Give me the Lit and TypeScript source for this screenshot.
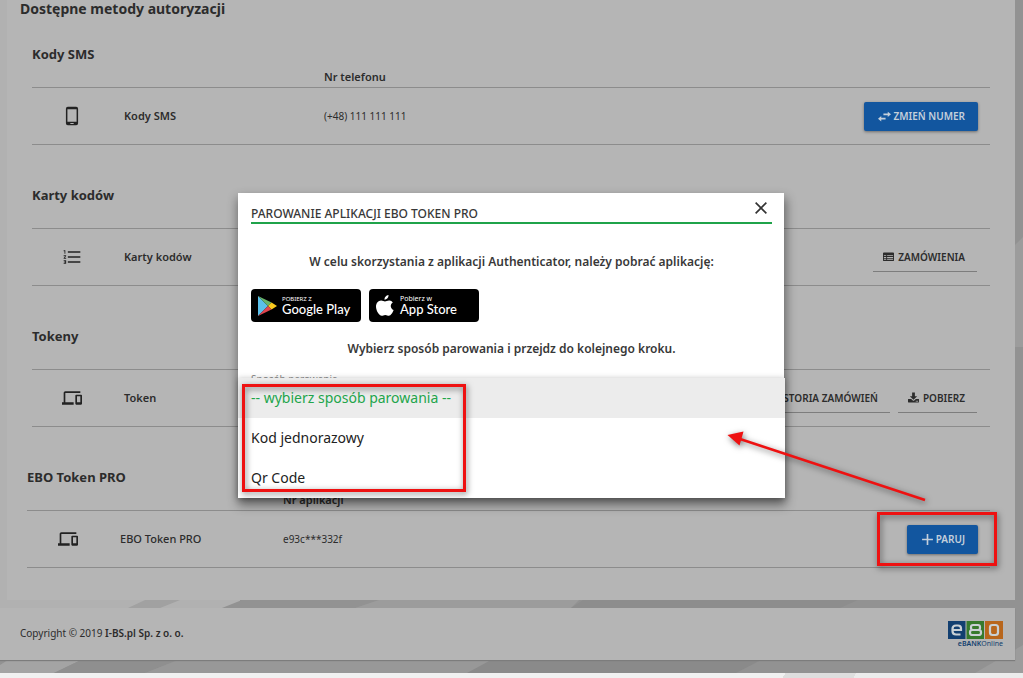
import { LitElement, html, css, svg, nothing } from "lit";
import { customElement, property } from "lit/decorators.js";

const icons: Record<string, unknown> = {
  phone: svg`<path fill-rule="evenodd" d="M7 1h10a2.300 2.300 0 0 1 2.300 2.300v17.400A2.300 2.300 0 0 1 17 23H7a2.300 2.300 0 0 1-2.300-2.300V3.300A2.300 2.300 0 0 1 7 1zM6.500 4v15h11V4zM10 20.500v1h4v-1z"/>`,
  list: svg`<path d="M2 17h2v.5H3v1h1v.5H2v1h3v-4H2zm1-9h1V4H2v1h1zm-1 3h1.800L2 13.100v.9h3v-1H3.200L5 10.900V10H2zm5-6v2h15V5zm0 14h15v-2H7zm0-6h15v-2H7z"/>`,
  devices: svg`<path d="M4 6h18V4H4c-1.100 0-2 .9-2 2v11H0v3h14v-3H4zm19 2h-6c-.55 0-1 .45-1 1v10c0 .55.450 1 1 1h6c.55 0 1-.45 1-1V9c0-.55-.45-1-1-1zm-1 9h-4v-7h4z"/>`,
  swap: svg`<path d="M10 6.500h8V3l6 5-6 5V9.500h-8zM14 17.500H6V21l-6-5 6-5v3.500h8z"/>`,
  table: svg`<path fill-rule="evenodd" d="M2 3h20a2 2 0 0 1 2 2v15a2 2 0 0 1-2 2H2a2 2 0 0 1-2-2V5a2 2 0 0 1 2-2zm0 6v2h5V9zm7 0v2h13V9zM2 13v2h5v-2zm7 0v2h13v-2zM2 17v2h5v-2zm7 0v2h13v-2z"/>`,
  history: svg`<path d="M13 3a9 9 0 0 0-9 9H1l4 4 4-4H6a7 7 0 1 1 2 5l-1.500 1.400A9 9 0 1 0 13 3zm-1 5v5l4.500 2.500.7-1.200-3.700-2.200V8z"/>`,
  download: svg`<path fill-rule="evenodd" d="M9 1h6v8h5l-8 8-8-8h5zM1 15h6l3.500 3.500a2 2 0 0 0 3 0L17 15h6a1 1 0 0 1 1 1v6a1 1 0 0 1-1 1H1a1 1 0 0 1-1-1v-6a1 1 0 0 1 1-1zm16 4v2h2v-2zm3 0v2h2v-2z"/>`,
  plus: svg`<path d="M10.500 2h3v8.500H22v3h-8.500V22h-3v-8.500H2v-3h8.500z"/>`,
  close: svg`<path d="M3.800 1.800 12 10l8.200-8.200 2 2L14 12l8.200 8.200-2 2L12 14l-8.200 8.200-2-2L10 12 1.800 3.800z"/>`,
};

const icon = (name: string, cls: string) =>
  html`<svg class=${cls} viewBox="0 0 24 24" aria-hidden="true">${icons[name]}</svg>`;

interface Action { label: string; icon: string; primary?: boolean }
interface Method {
  heading: string; column?: string; icon: string; name: string; value?: string;
  actions: Action[]; paired?: boolean;
}

const methods: Method[] = [
  { heading: "Kody SMS", column: "Nr telefonu", icon: "phone", name: "Kody SMS", value: "(+48) 111 111 111",
    actions: [{ label: "ZMIEŃ NUMER", icon: "swap", primary: true }] },
  { heading: "Karty kodów", icon: "list", name: "Karty kodów",
    actions: [{ label: "ZAMÓWIENIA", icon: "table" }] },
  { heading: "Tokeny", icon: "devices", name: "Token",
    actions: [{ label: "HISTORIA ZAMÓWIEŃ", icon: "history" }, { label: "POBIERZ", icon: "download" }] },
  { heading: "EBO Token PRO", column: "Nr aplikacji", icon: "devices", name: "EBO Token PRO", value: "e93c***332f",
    actions: [{ label: "PARUJ", icon: "plus", primary: true }], paired: true },
];

@customElement("auth-method")
class AuthMethod extends LitElement {
  @property({ attribute: false }) method!: Method;

  static styles = css`
    :host { display: block; color: #2c2c2c; }
    h2 { margin: 0; font-size: 13px; line-height: 24px; font-weight: 700; }
    table { width: 100%; table-layout: fixed; border-collapse: separate; border-spacing: 0; font-size: 11px; line-height: 16px; }
    th, td { padding: 0; text-align: left; border-bottom: 1px solid #8c8c8c; }
    thead th { height: 21px; font-weight: 600; }
    tbody th { font-weight: 600; }
    tbody td, tbody th { height: 56px; }
    .value { font-size: 10px; }
    .c-icon { width: 92px; }
    .c-name { width: 200px; }
    .paired .c-icon { width: 93px; }
    .paired .c-name { width: 163px; }
    .paired tbody th { font-weight: 500; }
    .c-actions { width: 320px; }
    td:first-child { padding-right: 12px; text-align: center; }
    .glyph { width: 20px; height: 20px; fill: #222; vertical-align: middle; }
    .actions { display: flex; justify-content: flex-end; gap: 8px; padding-right: 13px; }
    .actions.solid { padding-right: 12px; }
    button { display: flex; align-items: center; gap: 4px; height: 30px; padding: 0 12px 0 10px; border: 0;
      border-bottom: 1px solid #7d7d7d; background: none; color: #2c2c2c; font: 600 10px/16px "Noto Sans", sans-serif; white-space: nowrap; }
    button svg { width: 11px; height: 11px; fill: currentColor; }
    .solid button { gap: 2px; height: 29px; padding: 0 13px 0 14px; border: 0; border-radius: 2px; background: #12569f; color: #c4cfdb;
      box-shadow: 0 1px 3px rgba(0, 0, 0, .4); }
    .solid button svg { width: 13px; height: 13px; }
  `;

  render() {
    const m = this.method;
    const solid = m.actions.some((a) => a.primary);
    return html`
      <h2>${m.heading}</h2>
      <table class=${m.paired ? "paired" : ""}>
        <colgroup><col class="c-icon"><col class="c-name"><col><col class="c-actions"></colgroup>
        <thead><tr><th></th><th></th><th>${m.column ?? nothing}</th><th></th></tr></thead>
        <tbody><tr>
          <td>${icon(m.icon, "glyph")}</td>
          <th scope="row">${m.name}</th>
          <td class="value">${m.value ?? nothing}</td>
          <td><div class="actions ${solid ? "solid" : ""}">
            ${m.actions.map((a) => html`<button type="button">${icon(a.icon, "")}${a.label}</button>`)}
          </div></td>
        </tr></tbody>
      </table>`;
  }
}

@customElement("pairing-dialog")
class PairingDialog extends LitElement {
  static styles = css`
    :host { display: block; position: relative; width: 546px; height: 305px; box-sizing: border-box; padding: 0 12px 0 13px;
      background: #fff; color: #383838; box-shadow: 1px 6px 10px 1px rgba(0, 0, 0, .45); }
    header { display: flex; align-items: center; justify-content: space-between; height: 29px; border-bottom: 2px solid #1fa34a; }
    h1 { margin: 0; padding-top: 12px; font-size: 12px; line-height: 18px; font-weight: 500; }
    .close { display: flex; padding: 4px; border: 0; background: none; }
    .close svg { width: 14px; height: 14px; fill: #333; }
    p { margin: 0; font-size: 12px; line-height: 18px; font-weight: 600; text-align: center; }
    .first { padding: 29px 0 18px; }
    .second { padding: 18px 0 14px; }
    .badges { display: flex; gap: 8px; }
    .badge { display: flex; align-items: center; gap: 5px; width: 110px; height: 33px; box-sizing: border-box; padding-left: 6px;
      border-radius: 4px; background: #000; color: #fff; text-decoration: none; white-space: nowrap; }
    .badge svg { width: 20px; height: 22px; flex: none; }
    .badge span { display: flex; flex-direction: column; }
    .badge small { font: 7px/8px "Noto Sans", sans-serif; }
    .badge .play { font-size: 6px; }
    .badge strong { font: 500 13px/13px Lato, sans-serif; }
    label { display: block; font-size: 10px; line-height: 14px; color: #8a8a8a; }
    .field { width: 100%; height: 32px; border: 0; border-bottom: 1px solid #ccc; background: none; font: 14px "Noto Sans", sans-serif; }
    .menu { position: absolute; left: 0; right: -1px; bottom: 0; background: #fff; box-shadow: 0 1px 6px rgba(0, 0, 0, .3); }
    .menu button { display: block; width: 100%; height: 40px; padding: 0 13px; border: 0; background: #fff; color: #222;
      font: 14px/20px "Noto Sans", sans-serif; text-align: left; }
    .menu .current { background: #ececec; color: #22a54b; }
  `;

  render() {
    return html`
      <header>
        <h1>PAROWANIE APLIKACJI EBO TOKEN PRO</h1>
        <button class="close" type="button" aria-label="Zamknij">${icon("close", "")}</button>
      </header>
      <p class="first">W celu skorzystania z aplikacji Authenticator, należy pobrać aplikację:</p>
      <div class="badges">
        <a class="badge" href="#">
          <svg viewBox="0 0 20 22" aria-hidden="true">
            <path fill="#5bc0ea" d="M1 1v20L11 11z"/><path fill="#69b56b" d="M1 1l10 10 3.500-3.500z"/>
            <path fill="#f9c91e" d="M14.500 7.500 11 11l3.500 3.500L20 11z"/><path fill="#e2444f" d="M1 21l10-10 3.500 3.500z"/>
          </svg>
          <span><small class="play">POBIERZ Z</small><strong>Google Play</strong></span>
        </a>
        <a class="badge" href="#">
          <svg viewBox="0 0 20 22" aria-hidden="true" fill="#fff">
            <path d="M13.500 0c.2 2.300-1.700 4.700-4 4.700C9.200 2.500 11.200.3 13.500 0z"/>
            <path d="M17.800 7.500c-3 1.900-2.500 6.200.8 7.500-.9 2.500-2.700 5.700-4.700 5.800-1.400 0-1.900-.9-3.600-.9s-2.300.9-3.600.9C3.900 20.700 1 15.600 1 11.600 1 7.800 3.400 5.500 6.100 5.400c1.600 0 2.800 1 3.900 1s2.600-1.200 4.500-1c1.300.1 2.500.8 3.300 2.100z"/>
          </svg>
          <span><small>Pobierz w</small><strong>App Store</strong></span>
        </a>
      </div>
      <p class="second">Wybierz sposób parowania i przejdz do kolejnego kroku.</p>
      <label for="pairing">Sposób parowania</label>
      <select class="field" id="pairing"><option>-- wybierz sposób parowania --</option></select>
      <div class="menu" role="listbox" aria-label="Sposób parowania">
        <button class="current" role="option" aria-selected="true">-- wybierz sposób parowania --</button>
        <button role="option" aria-selected="false">Kod jednorazowy</button>
        <button role="option" aria-selected="false">Qr Code</button>
      </div>`;
  }
}

@customElement("app-root")
class AppRoot extends LitElement {
  static styles = css`
    :host { display: block; position: relative; min-height: 100vh; overflow: hidden; font-family: "Noto Sans", sans-serif; color: #2c2c2c;
      background: linear-gradient(120deg, #f1f1f1 83%, #dedede 83%, #dedede 88%, #ececec 88%); }
    .page { position: relative; padding: 0 8px 13px 0; background: #929292; }
    .stripes { position: absolute; inset: 0; width: 100%; height: 100%; }
    .panel, footer { position: relative; background: #b5b5b5; }
    .panel { margin-left: 7px; padding: 0 25px 32px 13px; }
    .title { margin: 0; font-size: 14px; line-height: 18px; font-weight: 700; }
    .methods { display: grid; gap: 38px; padding: 24px 0 0 12px; }
    .wide { margin-left: -5px; }
    footer { display: flex; align-items: center; justify-content: space-between; height: 52px; box-sizing: border-box; margin-top: 8px;
      padding: 0 12px 3px 20px; font-size: 10px; line-height: 16px; box-shadow: 0 1px 1px #7c7c7c; }
    footer b { font-weight: 600; }
    .logo { display: flex; flex-direction: column; align-items: flex-end; }
    .logo svg { width: 55px; height: 18px; margin-top: 5px; }
    .logo span { font-size: 7px; line-height: 10px; color: #12406e; }
    .logo b { font-weight: 600; }
    .overlay { position: absolute; inset: 0; display: flex; justify-content: center; align-items: flex-start; padding: 193px 1px 0 0; }
    .marks { position: absolute; left: 0; top: 0; width: 1023px; height: 678px; pointer-events: none; filter: drop-shadow(1px 2px 3px rgba(0, 0, 0, .55)); }
  `;

  render() {
    return html`
      <div class="page">
        <svg class="stripes" viewBox="0 0 1023 673" preserveAspectRatio="none" aria-hidden="true">
          <path fill="#b1b1b1" d="M0 0h8v660H0zM0 596h240v14H0z"/>
          <path fill="#a1a1a1" d="M145 600h35l-20 8h-32z"/>
          <path fill="#929292" d="M242 600h140l-27 8H222z"/>
          <path fill="#9c9c9c" d="M379 600h200l-8 8H355z"/>
          <path fill="#8d8d8d" d="M583 600h275l-18 8H571z"/>
          <path fill="#a4a4a4" d="M8 660h73l-27 13H0v-8z"/>
          <path fill="#8f8f8f" d="M81 660h97l-33 13H54z"/>
          <path fill="#989898" d="M178 660h313l-20 13H145z"/>
          <path fill="#8a8a8a" d="M491 660h270l-25 13H467z"/>
          <path fill="#9c9c9c" d="M1010 250l13-13v110h-13zM975 673l48-28v28z"/>
        </svg>
        <main class="panel">
          <h1 class="title">Dostępne metody autoryzacji</h1>
          <div class="methods">
            ${methods.map((m) => html`<auth-method class=${m.paired ? "wide" : ""} .method=${m}></auth-method>`)}
          </div>
        </main>
        <footer>
          <span>Copyright © 2019 <b>I-BS.pl Sp. z o. o.</b></span>
          <div class="logo">
            <svg viewBox="0 0 55 18" aria-hidden="true" fill="none" stroke="#c9d0d4" stroke-width="2.200">
              <path fill="#123f70" stroke="none" d="M0 0h17.500v18H0z"/>
              <path fill="#367a2c" stroke="none" d="M18.500 0H36v18H18.500z"/>
              <path fill="#b8661c" stroke="none" d="M37 0h18v18H37z"/>
              <path d="M4.500 9h8.500V7.500Q13 4.500 10 4.500H8Q4.500 4.500 4.500 8v2Q4.500 13.500 8 13.500h4.500"/>
              <path d="M25 4h5q2 0 2 2v1q0 2-2 2h-5q-2 0-2-2V6q0-2 2-2zM24.500 9h6q2.500 0 2.500 2v1q0 2-2.500 2h-6Q22 14 22 12v-1q0-2 2.500-2z"/>
              <path d="M44.500 4h3q2.500 0 2.500 2.500v5Q50 14 47.500 14h-3q-2.500 0-2.500-2.500v-5Q42 4 44.500 4z"/>
            </svg>
            <span><b>eBANK</b>Online</span>
          </div>
        </footer>
      </div>
      <div class="overlay"><pairing-dialog role="dialog" aria-modal="true"></pairing-dialog></div>
      <svg class="marks" viewBox="0 0 1023 678" aria-hidden="true" fill="none" stroke="#ee1111" stroke-width="3">
        <rect x="243.500" y="385.500" width="221" height="105"/>
        <rect x="878.500" y="513.500" width="117" height="51"/>
        <path stroke-width="2.500" d="M740 439l185 61"/>
        <path fill="#ee1111" stroke="none" d="M727.500 435l16-3.500-4 14z"/>
      </svg>`;
  }
}
